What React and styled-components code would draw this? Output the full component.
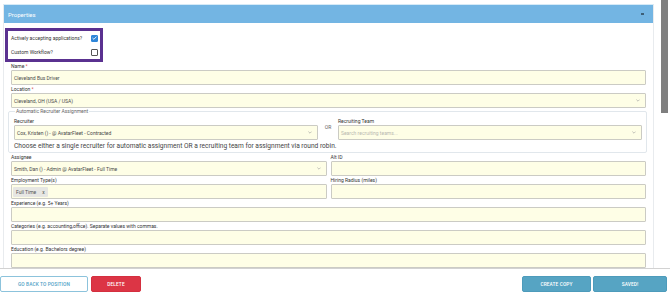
import React from "react";
import styled, { createGlobalStyle, css } from "styled-components";

const GlobalStyle = createGlobalStyle`
  html, body { margin: 0; padding: 0; background: #fff; }
  body { font-family: Roboto, "Liberation Sans", sans-serif; width: 670px; height: 297px; overflow: hidden; }
  *, *::before, *::after { box-sizing: border-box; }
`;

const Page = styled.div`
  display: flex;
  flex-direction: column;
  width: 670px;
  height: 297px;
`;

const Viewport = styled.div`
  display: flex;
  height: 268px;
  overflow: hidden;
`;

const Main = styled.div`
  width: 661px;
  padding: 4px 7px 0 3px;
  overflow: hidden;
`;

const ScrollTrack = styled.div`
  width: 9px;
  padding-right: 2px;
  display: flex;
  flex-direction: column;
`;

const ScrollThumb = styled.div`
  height: 113px;
  background: #7f7f7f;
`;

const Panel = styled.section`
  border: 1px solid #e8ebee;
  border-top-color: #d5eaf7;
  background: #fff;
`;

const PanelHeader = styled.div`
  height: 18px;
  background: #73b5e3;
  color: #fff;
  font-size: 6px;
  display: flex;
  align-items: center;
  justify-content: space-between;
  padding: 0 9px 0 4px;
`;

const Collapse = styled.span`
  width: 3px;
  height: 1.5px;
  background: #3d5f78;
`;

const PanelBody = styled.div`
  padding: 5px 7px 1px 7px;
`;

const ToggleBox = styled.div`
  width: 98px;
  margin-left: -6px;
  border: 3px solid #5a3190;
  padding: 0 2px 0 3px;
  display: flex;
  flex-direction: column;
`;

const ToggleRow = styled.div`
  height: 14px;
  display: flex;
  align-items: center;
  justify-content: space-between;
  font-size: 5px;
  color: #333;
`;

const Check = styled.span`
  width: 7px;
  height: 7px;
  border-radius: 1px;
  display: flex;
  align-items: center;
  justify-content: center;
  ${(p) =>
    p.$checked
      ? css`background: #2e86d8; border: 1px solid #2e86d8;`
      : css`background: #fff; border: 1px solid #555;`}
`;

const Label = styled.div`
  font-size: 5px;
  line-height: 8px;
  color: #333;
  white-space: nowrap;
  padding-top: ${(p) => p.$pad || 0}px;
`;

const Req = styled.span`
  color: #d9534f;
`;

const Field = styled.div`
  display: flex;
  flex-direction: column;
`;

const Input = styled.div`
  height: 15px;
  background: #fefee6;
  border: 1px solid #cbcbc4;
  border-radius: 1px;
  display: flex;
  align-items: center;
  justify-content: space-between;
  padding: 0 5px 0 1px;
  font-size: 5px;
  color: ${(p) => (p.$placeholder ? "#b9b9b0" : "#4a4a4a")};
  white-space: nowrap;
  overflow: hidden;
`;

const InputText = styled.span`
  padding-left: 1px;
`;

const Chevron = () => (
  <svg width="4" height="3" viewBox="0 0 4 3">
    <path d="M0.4 0.6 L2 2.2 L3.6 0.6" fill="none" stroke="#9a9a9a" strokeWidth="0.6" />
  </svg>
);

const Fieldset = styled.fieldset`
  margin: 0 -1px 0 -3px;
  border: 1px solid #e1e7ec;
  border-radius: 2px;
  padding: 0 4px 0 5px;
  min-width: 0;
`;

const Legend = styled.legend`
  font-size: 5px;
  line-height: 6px;
  color: #666;
  padding: 0 1px;
  margin-left: 1px;
`;

const AssignGrid = styled.div`
  display: grid;
  grid-template-columns: 1fr 10px 1fr;
  column-gap: 5px;
  align-items: center;
`;

const Or = styled.div`
  font-size: 5px;
  color: #666;
  text-align: center;
`;

const Help = styled.div`
  font-size: 6.6px;
  line-height: 12px;
  color: #444;
  white-space: nowrap;
`;

const TwoCol = styled.div`
  display: grid;
  grid-template-columns: 1fr 1fr;
  column-gap: 4px;
`;

const Tag = styled.span`
  height: 10px;
  display: inline-flex;
  align-items: center;
  gap: 6px;
  padding: 0 3px 0 3px;
  background: #e6e6e3;
  border-radius: 1px;
  color: #555;
  font-size: 5px;
`;

const Footer = styled.footer`
  height: 29px;
  border-top: 1px solid #d2d2d2;
  display: flex;
  justify-content: space-between;
  align-items: flex-start;
  padding: 7px 3px 0 0;
`;

const BtnGroup = styled.div`
  display: flex;
  gap: ${(p) => p.$gap}px;
`;

const Button = styled.button`
  height: 16px;
  width: ${(p) => p.$w}px;
  border-radius: 2px;
  font-family: Roboto, "Liberation Sans", sans-serif;
  font-size: 4.8px;
  font-weight: 500;
  text-transform: uppercase;
  letter-spacing: 0.1px;
  padding: 0;
  cursor: pointer;
  ${(p) =>
    p.$variant === "outline"
      ? css`background: #fff; border: 1px solid #8cc3dc; color: #4f9fc6;`
      : p.$variant === "danger"
      ? css`background: #dc3545; border: 1px solid #d42f3f; color: #fff;`
      : css`background: #56a4c3; border: 1px solid #4d9bbb; color: #fff;`}
`;

const Select = ({ children, placeholder }) => (
  <Input $placeholder={placeholder}>
    <InputText>{children}</InputText>
    <Chevron />
  </Input>
);

export default function App() {
  return (
    <>
      <GlobalStyle />
      <Page>
        <Viewport>
          <Main>
            <Panel>
              <PanelHeader>
                <span>Properties</span>
                <Collapse />
              </PanelHeader>
              <PanelBody>
                <ToggleBox>
                  <ToggleRow>
                    <span>Actively accepting applications?</span>
                    <Check $checked>
                      <svg width="5" height="4" viewBox="0 0 5 4">
                        <path d="M0.5 2 L1.9 3.3 L4.5 0.6" fill="none" stroke="#fff" strokeWidth="0.9" />
                      </svg>
                    </Check>
                  </ToggleRow>
                  <ToggleRow>
                    <span>Custom Workflow?</span>
                    <Check />
                  </ToggleRow>
                </ToggleBox>

                <Field>
                  <Label>
                    Name <Req>*</Req>
                  </Label>
                  <Input>
                    <InputText>Cleveland Bus Driver</InputText>
                  </Input>
                </Field>

                <Field>
                  <Label>
                    Location <Req>*</Req>
                  </Label>
                  <Select>Cleveland, OH (USA / USA)</Select>
                </Field>

                <Fieldset>
                  <Legend>Automatic Recruiter Assignment</Legend>
                  <AssignGrid>
                    <Field>
                      <Label $pad={3}>Recruiter</Label>
                      <Select>Cox, Kristen () - @ AvatarFleet - Contracted</Select>
                    </Field>
                    <Or>OR</Or>
                    <Field>
                      <Label $pad={3}>Recruiting Team</Label>
                      <Select placeholder>Search recruiting teams...</Select>
                    </Field>
                  </AssignGrid>
                  <Help>
                    Choose either a single recruiter for automatic assignment OR a recruiting team for assignment via round robin.
                  </Help>
                </Fieldset>

                <TwoCol>
                  <Field>
                    <Label>Assignee</Label>
                    <Select>Smith, Dan () - Admin @ AvatarFleet - Full Time</Select>
                  </Field>
                  <Field>
                    <Label>Alt ID</Label>
                    <Input />
                  </Field>
                </TwoCol>

                <TwoCol>
                  <Field>
                    <Label>Employment Type(s)</Label>
                    <Input>
                      <Tag>
                        <span>Full Time</span>
                        <span>x</span>
                      </Tag>
                    </Input>
                  </Field>
                  <Field>
                    <Label>Hiring Radius (miles)</Label>
                    <Input />
                  </Field>
                </TwoCol>

                <Field>
                  <Label>Experience (e.g. 5+ Years)</Label>
                  <Input />
                </Field>

                <Field>
                  <Label>Categories (e.g. accounting,office). Separate values with commas.</Label>
                  <Input />
                </Field>

                <Field>
                  <Label>Education (e.g. Bachelors degree)</Label>
                  <Input />
                </Field>
              </PanelBody>
            </Panel>
          </Main>
          <ScrollTrack>
            <ScrollThumb />
          </ScrollTrack>
        </Viewport>
        <Footer>
          <BtnGroup $gap={3}>
            <Button $variant="outline" $w={88}>Go back to position</Button>
            <Button $variant="danger" $w={50}>Delete</Button>
          </BtnGroup>
          <BtnGroup $gap={2}>
            <Button $variant="primary" $w={69}>Create copy</Button>
            <Button $variant="primary" $w={74}>Saved!</Button>
          </BtnGroup>
        </Footer>
      </Page>
    </>
  );
}
